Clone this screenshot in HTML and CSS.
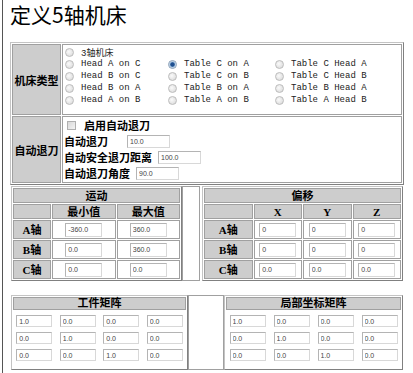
FILE: index.html
```html
<!DOCTYPE html>
<html lang="zh-CN">
<head>
    <meta charset="UTF-8">
    <title>定义5轴机床</title>
    <link rel="stylesheet" href="styles.css">
</head>
<body>
<div class="page">
    <h1>定义5轴机床</h1>

    <table class="frame">
        <tr>
            <th class="side">机床类型</th>
            <td class="body kinds">
                <div class="radios">
                    <label><input type="radio" name="kind">3轴机床</label>
                    <span></span><span></span>
                    <label><input type="radio" name="kind">Head A on C</label>
                    <label><input type="radio" name="kind" checked>Table C on A</label>
                    <label><input type="radio" name="kind">Table C Head A</label>
                    <label><input type="radio" name="kind">Head B on C</label>
                    <label><input type="radio" name="kind">Table C on B</label>
                    <label><input type="radio" name="kind">Table C Head B</label>
                    <label><input type="radio" name="kind">Head B on A</label>
                    <label><input type="radio" name="kind">Table B on A</label>
                    <label><input type="radio" name="kind">Table B Head A</label>
                    <label><input type="radio" name="kind">Head A on B</label>
                    <label><input type="radio" name="kind">Table A on B</label>
                    <label><input type="radio" name="kind">Table A Head B</label>
                </div>
            </td>
        </tr>
        <tr>
            <th class="side">自动退刀</th>
            <td class="body retract">
                <div class="line"><input type="checkbox" class="check"><span class="name">启用自动退刀</span></div>
                <div class="line"><span class="name">自动退刀</span><input type="text" class="field far" value="10.0"></div>
                <div class="line"><span class="name">自动安全退刀距离</span><input type="text" class="field" value="100.0"></div>
                <div class="line"><span class="name">自动退刀角度</span><input type="text" class="field" value="90.0"></div>
            </td>
        </tr>
    </table>

    <div class="split axes">
        <table class="grid motion">
            <colgroup><col class="c-axis"><col><col></colgroup>
            <tr class="head"><th colspan="3">运动</th></tr>
            <tr class="head"><th></th><th>最小值</th><th>最大值</th></tr>
            <tr><th>A轴</th><td><input type="text" value="-360.0"></td><td><input type="text" value="360.0"></td></tr>
            <tr><th>B轴</th><td><input type="text" value="0.0"></td><td><input type="text" value="360.0"></td></tr>
            <tr><th>C轴</th><td><input type="text" value="0.0"></td><td><input type="text" value="0.0"></td></tr>
        </table>
        <div class="gap"></div>
        <table class="grid offset">
            <tr class="head"><th colspan="4">偏移</th></tr>
            <tr class="head"><th></th><th>X</th><th>Y</th><th>Z</th></tr>
            <tr><th>A轴</th><td><input type="text" value="0"></td><td><input type="text" value="0"></td><td><input type="text" value="0"></td></tr>
            <tr><th>B轴</th><td><input type="text" value="0"></td><td><input type="text" value="0"></td><td><input type="text" value="0"></td></tr>
            <tr><th>C轴</th><td><input type="text" value="0.0"></td><td><input type="text" value="0.0"></td><td><input type="text" value="0.0"></td></tr>
        </table>
    </div>

    <div class="split matrices">
        <table class="matrix part">
            <tr class="head"><th colspan="4">工件矩阵</th></tr>
            <tr><td><input type="text" value="1.0"></td><td><input type="text" value="0.0"></td><td><input type="text" value="0.0"></td><td><input type="text" value="0.0"></td></tr>
            <tr><td><input type="text" value="0.0"></td><td><input type="text" value="1.0"></td><td><input type="text" value="0.0"></td><td><input type="text" value="0.0"></td></tr>
            <tr class="last"><td><input type="text" value="0.0"></td><td><input type="text" value="0.0"></td><td><input type="text" value="1.0"></td><td><input type="text" value="0.0"></td></tr>
        </table>
        <div class="gap wide"></div>
        <table class="matrix local">
            <tr class="head"><th colspan="4">局部坐标矩阵</th></tr>
            <tr><td><input type="text" value="1.0"></td><td><input type="text" value="0.0"></td><td><input type="text" value="0.0"></td><td><input type="text" value="0.0"></td></tr>
            <tr><td><input type="text" value="0.0"></td><td><input type="text" value="1.0"></td><td><input type="text" value="0.0"></td><td><input type="text" value="0.0"></td></tr>
            <tr class="last"><td><input type="text" value="0.0"></td><td><input type="text" value="0.0"></td><td><input type="text" value="1.0"></td><td><input type="text" value="0.0"></td></tr>
        </table>
    </div>
</div>
</body>
</html>
```

FILE: styles.css
```css
* {
    box-sizing: border-box;
}
html, body {
    margin: 0;
    background: #fff;
}
body {
    font-family: "Noto Sans CJK SC", sans-serif;
    color: #000;
}
.page {
    margin-left: 2px;
    padding-left: 7px;
    border-left: 1px solid #555;
    height: 373px;
    overflow: hidden;
}
h1 {
    margin: 0 0 15px;
    padding-top: 1px;
    font-size: 21px;
    font-weight: normal;
    line-height: 26px;
}

/* outer frame */
.frame {
    width: 394px;
    border-collapse: separate;
    border-spacing: 1px;
    border: 1px solid;
    border-color: #c4c4c4 #808080 #808080 #c4c4c4;
}
.frame td, .frame th {
    padding: 0;
    border: 1px solid #a0a0a0;
}
.side {
    width: 49px;
    background: #cdcdcd;
    font-size: 11px;
    font-weight: bold;
    text-align: center;
    vertical-align: middle;
}
.body {
    background: #fff;
}
.kinds {
    padding: 1px 0 8px 1px !important;
}
.radios {
    display: grid;
    grid-template-columns: 103px 107px 1fr;
    grid-auto-rows: 12px;
    font-family: "Liberation Mono", "Noto Sans CJK SC", monospace;
    font-size: 9px;
    color: #222;
}
.radios label {
    display: flex;
    align-items: center;
    gap: 7px;
    padding-left: 1px;
    white-space: nowrap;
}
.radios input {
    appearance: none;
    width: 9px;
    height: 9px;
    margin: 0;
    border: 1px solid #bcbcbc;
    border-radius: 50%;
    background: radial-gradient(circle at 40% 40%, #fafafa, #d6d6d6);
}
.radios input:checked {
    border-color: #8aa0b8;
    background: radial-gradient(circle, #1f4f8f 0 1.8px, #7fa6d0 2.4px, #e6eef6 3.5px);
}

.retract {
    padding: 0 0 1px 1px !important;
}
.line {
    display: flex;
    align-items: center;
    height: 16px;
    font-size: 11px;
    font-weight: bold;
}
.check {
    appearance: none;
    width: 9px;
    height: 9px;
    margin: 0 8px 0 3px;
    border: 1px solid #b0b0b0;
    background: linear-gradient(135deg, #d8d8d8, #f4f4f4);
}
.field {
    margin-left: 6px;
    width: 43px;
    height: 13px;
}
.field.far {
    margin-left: 19px;
}

input[type="text"] {
    padding: 0 2px;
    border: 1px solid;
    border-color: #b4b4b4 #d8d8d8 #d8d8d8 #b4b4b4;
    background: #fff;
    font-family: "Liberation Sans", sans-serif;
    font-size: 7px;
    color: #444;
    outline: none;
}

/* side-by-side tables */
.split {
    display: flex;
    margin-left: 1px;
    width: 392px;
}
.axes {
    margin-top: 1px;
}
.matrices {
    margin-top: 14px;
}
.gap {
    width: 18px;
    margin-right: 2px;
    border: 1px solid #a0a0a0;
    background: #fff;
}
.gap.wide {
    width: 36px;
    margin-right: 0;
}

.grid, .matrix {
    border-collapse: separate;
    border-spacing: 1px;
    border: 1px solid;
    border-color: #c4c4c4 #808080 #808080 #c4c4c4;
    table-layout: fixed;
}
.grid th, .grid td {
    padding: 0;
    border: 1px solid #a0a0a0;
    height: 19px;
    line-height: 12px;
    text-align: center;
    vertical-align: middle;
}
.grid th, .matrix th {
    background: #cdcdcd;
    font-family: "Liberation Serif", "Noto Sans CJK SC", serif;
    font-size: 11px;
    font-weight: bold;
}
.grid .head th {
    height: 15px;
}
.grid td {
    background: #fff;
}
.grid input {
    display: block;
    margin: 0 auto;
    width: 37px;
    height: 14px;
}
.motion {
    width: 171px;
}
.motion .c-axis {
    width: 38px;
}
.offset {
    width: 201px;
}

.matrix th {
    height: 13px;
    padding: 0;
    border: 1px solid #a0a0a0;
    line-height: 11px;
}
.matrix td {
    padding: 4px 0 0;
    height: 16px;
    vertical-align: top;
}
.matrix .last td {
    height: 23px;
}
.matrix input {
    display: block;
    margin: 0 auto;
    width: 36px;
    height: 12px;
}
.part {
    width: 177px;
}
.local {
    width: 179px;
}
```
